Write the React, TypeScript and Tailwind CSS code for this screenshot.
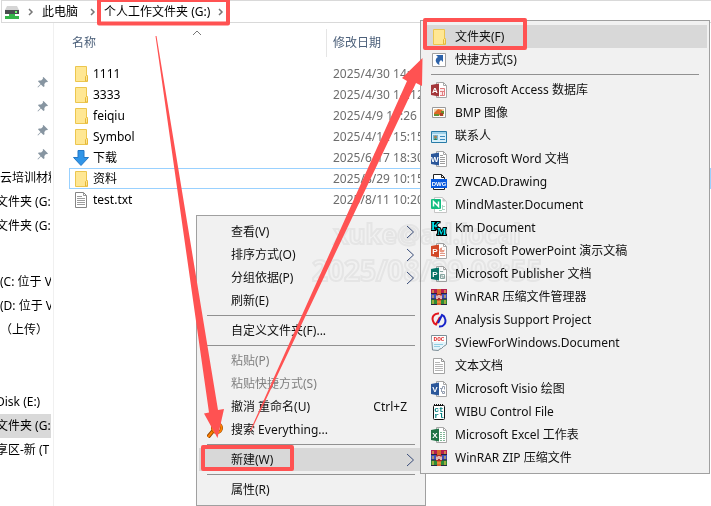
import type { ReactNode } from "react"

type Item = {
  label: string
  icon?: ReactNode
  hint?: string
  arrow?: boolean
  disabled?: boolean
  active?: boolean
}

function Svg({ children }: { children: ReactNode }) {
  return (
    <svg width="16" height="16" viewBox="0 0 16 16" className="shrink-0" aria-hidden="true">
      {children}
    </svg>
  )
}

function FolderIcon() {
  return (
    <Svg>
      <path d="M2.5 .5h11v9h1v6h-12z" fill="#ffe793" stroke="#ecc64e" />
      <path d="M12.5 15v-4.5l1-1 1 1V15z" fill="#ffe793" stroke="#e6b93a" />
    </Svg>
  )
}

function TextFileIcon({ light }: { light?: boolean }) {
  return (
    <Svg>
      <path d="M2.5 .5h8l3 3v12h-11z" fill="#fff" stroke={light ? "#a3a3a3" : "#858585"} />
      <path d="M10.5 .5v3h3" fill="none" stroke="#969696" />
      <path d="M4 4.5h5M4 6.5h8M4 8.5h8M4 10.5h8M4 12.5h8" stroke={light ? "#b5b5b5" : "#9c9c9c"} />
    </Svg>
  )
}

function DownloadIcon() {
  return (
    <Svg>
      <path d="M5 .5h6v7h4.500L8 15.500 .5 7.500H5z" fill="#3095e8" stroke="#2377c5" />
    </Svg>
  )
}

function PinIcon() {
  return (
    <svg width="12" height="12" viewBox="0 0 12 12" aria-hidden="true">
      <path d="M6.500 1l4.500 4.500-1 .8-1-.3L7.300 8l.2 2.200-1 .8-2.600-2.600L1 11.500l-.5-.5 3-3L1 5.300l.8-.9 2.300.2L6 2.800 5.700 1.700z" fill="#8795a1" />
    </svg>
  )
}

function DriveIcon() {
  return (
    <svg width="16" height="16" viewBox="0 0 16 16" className="shrink-0" aria-hidden="true">
      <path d="M3 2h10l2 4H1z" fill="#d5d5d5" />
      <path d="M1 6h14v4H1z" fill="#4a4d4f" />
      <path d="M11 7h2v2h-2z" fill="#6cff6c" />
      <path d="M5 10h6v2h4v3H1v-3h4z" fill="#35b449" />
    </svg>
  )
}

function Crumb() {
  return (
    <svg width="6" height="8" viewBox="0 0 6 8" className="shrink-0" aria-hidden="true">
      <path d="M1 1l3 3-3 3" fill="none" stroke="#777" strokeWidth="1.500" />
    </svg>
  )
}

// Office document: page at the right, coloured plate with a letter at the left
function OfficeIcon({ color, letter, children }: { color: string; letter: string; children: ReactNode }) {
  return (
    <Svg>
      <path d="M5.500 .5h7l3 3v12h-10z" fill="#fff" stroke="#a6a6a6" />
      <path d="M12.500 .5v3h3" fill="none" stroke="#a6a6a6" />
      {children}
      <path d="M0 3l8-1.500v13L0 13z" fill={color} />
      <text x="3.900" y="11" textAnchor="middle" fontSize="8" fontWeight="700" fontFamily="Liberation Sans, sans-serif" fill="#fff">
        {letter}
      </text>
    </Svg>
  )
}

function RarIcon() {
  return (
    <Svg>
      <path d="M0 0h16v5H0z" fill="#b51f50" />
      <path d="M0 5h16v5H0z" fill="#3f50bd" />
      <path d="M0 10h16v6H0z" fill="#2d8c36" />
      <path d="M0 4.500h16M0 10h16M0 15.500h16" stroke="#262340" />
      <path d="M2 1v3M2 6v3M2 11v4M14 1v3M14 6v3M14 11v4" stroke="#eac047" strokeWidth="1.200" />
      <path d="M6 0h4v16H6z" fill="#d8662c" />
      <path d="M5 5h6v6H5z" fill="#a92c2a" />
      <path d="M6 10V6.500M10 10V6.500M8 9V6" stroke="#fff" strokeWidth="1.300" />
      <path d="M6 13h4" stroke="#f4ae42" />
    </Svg>
  )
}

const createItems: Item[] = [
  {
    label: "Microsoft Access 数据库",
    icon: (
      <OfficeIcon color="#a4373a" letter="A">
        <path d="M9 6.500h4.500v7H9M9 9.500h4.500M11.500 9.500v4" fill="#fbe9e9" stroke="#e17d80" />
      </OfficeIcon>
    ),
  },
  {
    label: "BMP 图像",
    icon: (
      <Svg>
        <path d="M1.500 2.500h13v10h-13z" fill="#fff" stroke="#9a9a9a" />
        <path d="M3 4h10v7H3z" fill="#f1d2a5" />
        <path d="M3 8l4-4 4 1 1 3-3 2H3z" fill="#df6725" />
        <path d="M3 9h5v2H3zM10 6h3v3h-3z" fill="#668f2f" />
        <path d="M9 8h3v3H9z" fill="#ac3e25" />
      </Svg>
    ),
  },
  {
    label: "联系人",
    icon: (
      <Svg>
        <path d="M.5 3.500h15v11H.5z" fill="#d7effa" stroke="#287ba7" />
        <path d="M1 4h14v2H1z" fill="#9dd0e8" />
        <path d="M2 7h5v5H2z" fill="#78b6d4" />
        <circle cx="4.500" cy="9" r="1.500" fill="#a88252" />
        <path d="M3 12c0-2 3-2 3 0z" fill="#218456" />
        <path d="M9 8.500h5M9 11.500h5" stroke="#3b8abe" />
      </Svg>
    ),
  },
  {
    label: "Microsoft Word 文档",
    icon: (
      <OfficeIcon color="#2b579a" letter="W">
        <path d="M9 4.500h3M9 6.500h5M9 8.500h5M9 10.500h5M9 12.500h5" stroke="#9c9c9c" />
      </OfficeIcon>
    ),
  },
  {
    label: "ZWCAD.Drawing",
    icon: (
      <Svg>
        <path d="M2.500 .5h8l3 3v12h-11z" fill="#fff" stroke="#222" />
        <path d="M10.500 .5v3h3" fill="none" stroke="#222" />
        <path d="M0 5h16v9H0z" fill="#0758dc" />
        <text x="8" y="12" textAnchor="middle" fontSize="6" fontWeight="700" fontFamily="Liberation Sans, sans-serif" fill="#fff">
          DWG
        </text>
      </Svg>
    ),
  },
  {
    label: "MindMaster.Document",
    icon: (
      <Svg>
        <path d="M3.500 .5h8l4 4v11h-12z" fill="#fff" stroke="#c5c5c5" />
        <path d="M11.500 .5v4h4z" fill="#c5c5c5" />
        <path d="M8 13.500h3M12 9.500h2M12 12.500h2M11.500 8v5" stroke="#a8d5c2" />
        <rect y="2" width="10" height="10" rx="1" fill="#12bd80" />
        <path d="M2.500 9.500v-5l5 5v-5" fill="none" stroke="#fff" strokeWidth="1.500" />
      </Svg>
    ),
  },
  {
    label: "Km Document",
    icon: (
      <Svg>
        <g fontFamily="Liberation Serif, serif" fontWeight="700" fill="#00e5ee" stroke="#000" strokeWidth="2" paintOrder="stroke">
          <text x="0" y="10" fontSize="12">K</text>
          <text x="6" y="15" fontSize="10">M</text>
        </g>
      </Svg>
    ),
  },
  {
    label: "Microsoft PowerPoint 演示文稿",
    icon: (
      <OfficeIcon color="#d24726" letter="P">
        <circle cx="11" cy="7" r="2.500" fill="#e79782" />
        <path d="M11 7V4.500A2.500 2.500 0 0113.500 7z" fill="#fff" />
        <path d="M9 10.500h5M9 12.500h5" stroke="#df9887" />
      </OfficeIcon>
    ),
  },
  {
    label: "Microsoft Publisher 文档",
    icon: (
      <OfficeIcon color="#077568" letter="P">
        <path d="M9 5.500h3M9.500 8.500h4v4h-4zM11 8v3h3" fill="none" stroke="#89a9a4" />
      </OfficeIcon>
    ),
  },
  { label: "WinRAR 压缩文件管理器", icon: <RarIcon /> },
  {
    label: "Analysis Support Project",
    icon: (
      <Svg>
        <path d="M8 1.500C3 1 .5 5 2 9c.5 2 1.500 3 3 3.500L9 5" fill="none" stroke="#e3161d" strokeWidth="2" />
        <path d="M8 14.500c5 .5 7.500-4 6-8-.5-2-1.500-3-3-3.500L7 11" fill="none" stroke="#1723c9" strokeWidth="2" />
      </Svg>
    ),
  },
  {
    label: "SViewForWindows.Document",
    icon: (
      <Svg>
        <path d="M.5 .5h15v9l-3 2-2 2-2 .5-1 1.500-6-.5z" fill="#e4f4fa" stroke="#7b8d96" />
        <path d="M3 9.500h9M3 11.500h6" stroke="#91cde2" />
        <path d="M1 1h14v6H1z" fill="#fff" />
        <text x="8" y="6" textAnchor="middle" fontSize="6" fontWeight="700" fontFamily="Liberation Mono, monospace" fill="#e03030">
          DOC
        </text>
      </Svg>
    ),
  },
  { label: "文本文档", icon: <TextFileIcon light /> },
  {
    label: "Microsoft Visio 绘图",
    icon: (
      <OfficeIcon color="#2b579a" letter="V">
        <path d="M9 7.500h2.500v-2h2v3M10.500 8v3M11.500 10.500h2v2h-2z" fill="none" stroke="#929daf" />
      </OfficeIcon>
    ),
  },
  {
    label: "WIBU Control File",
    icon: (
      <Svg>
        <rect x="2.500" y="1.500" width="11" height="14" rx="1" fill="#fff" stroke="#111" />
        <path d="M3 1h10" stroke="#111" strokeWidth="2" strokeDasharray="1 1" />
        <g fontFamily="Liberation Mono, monospace" fontSize="8" fontWeight="700" fill="#078080" textAnchor="middle">
          <text x="8" y="8">ct</text>
          <text x="8" y="14">rl</text>
        </g>
      </Svg>
    ),
  },
  {
    label: "Microsoft Excel 工作表",
    icon: (
      <OfficeIcon color="#217346" letter="X">
        <path d="M9 5.500h2M12 5.500h2M9 7.500h2M12 7.500h2M9 9.500h2M12 9.500h2M9 11.500h2M12 11.500h2M9 13.500h2M12 13.500h2" stroke="#82b697" />
      </OfficeIcon>
    ),
  },
  { label: "WinRAR ZIP 压缩文件", icon: <RarIcon /> },
]

const shortcutItems: Item[] = [
  { label: "文件夹(F)", icon: <FolderIcon />, active: true },
  {
    label: "快捷方式(S)",
    icon: (
      <Svg>
        <path d="M1.500 1.500h13v13h-13z" fill="#fff" stroke="#a0a0a0" />
        <path d="M5 3h7v7l-2-2c-2 1.500-2 3-1.500 5C4 11 3.500 7 7 5z" fill="#2c62a9" />
      </Svg>
    ),
  },
]

const contextGroups: Item[][] = [
  [
    { label: "查看(V)", arrow: true },
    { label: "排序方式(O)", arrow: true },
    { label: "分组依据(P)", arrow: true },
    { label: "刷新(E)" },
  ],
  [{ label: "自定义文件夹(F)..." }],
  [
    { label: "粘贴(P)", disabled: true },
    { label: "粘贴快捷方式(S)", disabled: true },
    { label: "撤消 重命名(U)", hint: "Ctrl+Z" },
    {
      label: "搜索 Everything...",
      icon: (
        <Svg>
          <path d="M1 15l5-6" stroke="#8f4300" strokeWidth="4" />
          <path d="M1 15l5-6" stroke="#ff8000" strokeWidth="2" />
          <circle cx="10" cy="6" r="4.500" fill="#f5e4d1" stroke="#8f4300" strokeWidth="3" />
          <circle cx="10" cy="6" r="4.500" fill="none" stroke="#ff8000" strokeWidth="2" />
        </Svg>
      ),
    },
  ],
  [{ label: "新建(W)", arrow: true, active: true }],
  [{ label: "属性(R)" }],
]

const files = [
  { name: "1111", date: "2025/4/30 14:12", icon: <FolderIcon /> },
  { name: "3333", date: "2025/4/30 14:12", icon: <FolderIcon /> },
  { name: "feiqiu", date: "2025/4/9 13:26", icon: <FolderIcon /> },
  { name: "Symbol", date: "2025/4/12 15:15", icon: <FolderIcon /> },
  { name: "下载", date: "2025/6/17 18:30", icon: <DownloadIcon /> },
  { name: "资料", date: "2025/8/29 10:15", icon: <FolderIcon />, selected: true },
  { name: "test.txt", date: "2025/8/11 10:20", icon: <TextFileIcon /> },
]

const quickLinks = ["云培训材料", "文件夹 (G:)", "文件夹 (G:)"]
const drives = ["(C: 位于 V", "(D: 位于 V", "（上传）", "", "", "Disk (E:)", "文件夹 (G:)", "享区-新 (T"]

function MenuItem({ item }: { item: Item }) {
  return (
    <button
      type="button"
      role="menuitem"
      disabled={item.disabled}
      className={`flex h-[23px] w-full items-center gap-2 px-2 text-left ${
        item.active ? "bg-[#d8d8d8]" : ""
      } ${item.disabled ? "text-[#808080]" : "text-[#111]"}`}
    >
      <span className="flex w-4 shrink-0">{item.icon}</span>
      <span className="flex-1 whitespace-nowrap">{item.label}</span>
      {item.hint && <span className="pr-2">{item.hint}</span>}
      {item.arrow && (
        <svg width="9" height="14" viewBox="0 0 9 14" aria-hidden="true">
          <path d="M1 1l6.500 6L1 13" fill="none" stroke="#394c79" />
        </svg>
      )}
    </button>
  )
}

function Divider() {
  return (
    <div className="px-2 py-[3px]">
      <hr className="border-[#919191]" />
    </div>
  )
}

export default function App() {
  return (
    <div className="relative flex min-h-screen flex-col overflow-hidden bg-white font-['Noto_Sans','Noto_Sans_CJK_SC',sans-serif] text-xs text-black">
      <header className="ml-px flex h-[23px] items-center border border-r-0 border-[#d9d9d9] pl-0.5 whitespace-nowrap">
        <DriveIcon />
        <nav className="flex items-center gap-3 pl-2" aria-label="路径">
          <Crumb />
          <a href="#pc" className="-ml-1">此电脑</a>
          <Crumb />
          <a href="#g" className="-ml-1">个人工作文件夹 (G:)</a>
          <span className="-ml-1">
            <Crumb />
          </span>
        </nav>
      </header>

      <div className="flex flex-1">
        <aside className="w-[54px] shrink-0 overflow-hidden border-r border-[#f0f0f0] pt-[47px] pr-0.5 whitespace-nowrap">
          {[1, 2, 3, 4].map((n) => (
            <div key={n} className="flex h-6 items-center justify-end pr-0.5">
              <PinIcon />
            </div>
          ))}
          {quickLinks.map((name, i) => (
            <a key={i} href="#quick" className="flex h-6 items-center overflow-hidden">
              <span className={i > 0 ? "-ml-1" : ""}>{name}</span>
            </a>
          ))}
          <div className="pt-8">
            {drives.map((name, i) =>
              name ? (
                <a
                  key={i}
                  href="#drive"
                  className={`flex h-6 items-center overflow-hidden ${i === 6 ? "bg-[#d9d9d9]" : ""}`}
                >
                  <span className={i > 4 ? "-ml-1" : ""}>{name}</span>
                </a>
              ) : (
                <div key={i} className="h-6" />
              )
            )}
          </div>
        </aside>

        <main className="relative min-w-0 flex-1 pl-[15px]">
          <svg width="10" height="6" viewBox="0 0 10 6" className="absolute left-[138px] top-[7px]" aria-hidden="true">
            <path d="M1 5l4-4 4 4" fill="none" stroke="#777" />
          </svg>
          <table className="w-full table-fixed border-collapse">
            <thead>
              <tr className="h-10 text-left text-[#4c607a]">
                <th className="w-[257px] p-0 pl-[3px] font-normal">名称</th>
                <th className="p-0 font-normal">
                  <div className="flex h-7 items-center border-l border-[#e5e5e5] pl-1.5">修改日期</div>
                </th>
              </tr>
            </thead>
            <tbody>
              {files.map((file) => (
                <tr
                  key={file.name}
                  className={`h-[21px] ${file.selected ? "outline outline-[#99d1ff] -outline-offset-1" : ""}`}
                >
                  <td className="p-0 pl-1">
                    <div className="flex h-[21px] items-center gap-1">
                      {file.icon}
                      <span>{file.name}</span>
                    </div>
                  </td>
                  <td className="p-0 pl-[7px] whitespace-nowrap text-[#6d6d6d]">{file.date}</td>
                </tr>
              ))}
            </tbody>
          </table>
        </main>
      </div>

      <div role="menu" className="absolute left-[196px] top-[215px] w-[230px] border border-[#a0a0a0] bg-[#f1f1f1] px-0.5 py-1">
        {contextGroups.map((group, i) => (
          <div key={i}>
            {i > 0 && <Divider />}
            {group.map((item) => (
              <MenuItem key={item.label} item={item} />
            ))}
          </div>
        ))}
      </div>

      <div role="menu" className="absolute left-[420px] top-[20px] w-[290px] border border-[#a0a0a0] bg-[#f1f1f1] px-0.5 py-1">
        {shortcutItems.map((item) => (
          <MenuItem key={item.label} item={item} />
        ))}
        <Divider />
        {createItems.map((item) => (
          <MenuItem key={item.label} item={item} />
        ))}
      </div>

      {/* watermark */}
      <div className="pointer-events-none absolute left-[312px] top-[216px] text-center font-['Open_Sans',sans-serif] text-[26px] leading-9 font-bold whitespace-nowrap text-transparent [-webkit-text-stroke:2px_#f3f3f3] mix-blend-multiply">
        <p>xuke@ad.local</p>
        <p className="text-[28px]">2025/08/29 08:55</p>
      </div>

      <svg width="711" height="506" viewBox="0 0 711 506" className="pointer-events-none absolute left-0 top-0" aria-hidden="true">
        <g fill="none" stroke="#ff5252" strokeWidth="4" strokeLinejoin="round">
          <path d="M99 0h129v23.500H99z" />
          <path d="M203 447h89v22h-89z" />
          <path d="M425 20h100v28H425z" />
        </g>
        <g fill="#ff5252">
          <path d="M155.500 36h1l61.500 374 6-1-6.500 29L204 413.500l5-1z" />
          <path d="M250 431L407 81l-5-3 20.500-20-.5 28-6-3L251 431z" />
        </g>
      </svg>
    </div>
  )
}
